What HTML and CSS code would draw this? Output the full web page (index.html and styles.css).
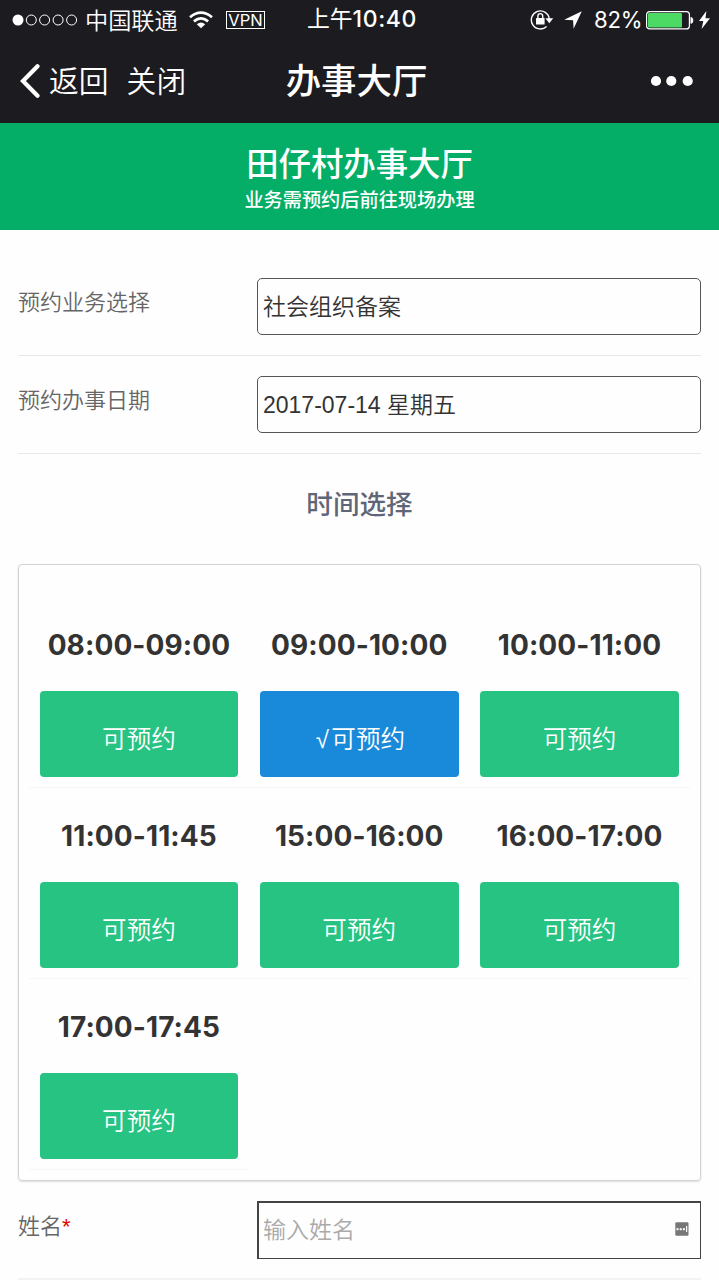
FILE: index.html
```html
<!DOCTYPE html>
<html lang="zh-CN">
<head>
<meta charset="utf-8">
<title>办事大厅</title>
<link rel="stylesheet" href="styles.css">
</head>
<body>
<header class="top">
  <div class="status">
    <div class="status-left">
      <svg class="signal" width="66" height="14" viewBox="0 0 66 14"><circle cx="6" cy="7" r="5.5" fill="#fff"/><g fill="none" stroke="#fff" stroke-width="1"><circle cx="19.3" cy="7" r="5"/><circle cx="32.6" cy="7" r="5"/><circle cx="46.1" cy="7" r="5"/><circle cx="59.6" cy="7" r="5"/></g></svg>
      <span class="carrier">中国联通</span>
      <svg class="wifi" width="24" height="18" viewBox="0 0 24 18"><g fill="none" stroke="#fff" stroke-width="2.7"><path d="M1 6.2Q12 -2.8 23 6.2"/><path d="M4.9 10.4Q12 4.4 19.1 10.4"/></g><path d="M12 17.2L7.8 13.2Q12 9.8 16.2 13.2Z" fill="#fff"/></svg>
      <span class="vpn">VPN</span>
    </div>
    <div class="clock">上午<span class="digits">10:40</span></div>
    <div class="status-right">
      <svg class="lock" width="24" height="22" viewBox="0 0 24 22"><path d="M19.3 10a9 9 0 1 0-2.7 7.4" fill="none" stroke="#fff" stroke-width="1.4"/><path d="M15.4 9.3H23.2L19.3 14.2Z" fill="#fff"/><rect x="6" y="9" width="8.6" height="6.6" rx=".6" fill="#fff"/><path d="M7.9 10V7a2.4 2.4 0 0 1 4.8 0V10" fill="none" stroke="#fff" stroke-width="1.4"/></svg>
      <svg class="arrow" width="18" height="18" viewBox="0 0 18 18"><path d="M17.8.3L9.6 17.8 9.1 9.2 .2 8.7Z" fill="#fff"/></svg>
      <span class="percent">82%</span>
      <svg class="battery" width="48" height="19" viewBox="0 0 48 19"><rect x=".6" y=".6" width="42.8" height="17.3" rx="3" fill="none" stroke="#fff" stroke-width="1.2"/><rect x="2" y="2" width="34" height="14.5" rx="1.2" fill="#4cd964"/><path d="M44.8 6.3Q47 6.5 47 9.4T44.8 12.5Z" fill="#fff" stroke="#fff" stroke-width=".6"/></svg>
      <svg class="bolt" width="11" height="18" viewBox="0 0 11 18"><path d="M7.4 0L0 10h4.3L2.6 18 11 7.2H6.5Z" fill="#fff"/></svg>
    </div>
  </div>
  <nav class="nav">
    <div class="nav-left">
      <svg class="chevron" width="21" height="36" viewBox="0 0 21 36"><path d="M18.5 3.2L4 18 18.5 32.8" fill="none" stroke="#fff" stroke-width="4.2" stroke-linecap="round"/></svg>
      <span class="back">返回</span><span class="close">关闭</span>
    </div>
    <h1 class="nav-title">办事大厅</h1>
    <svg class="more" width="44" height="12" viewBox="0 0 44 12"><g fill="#fff"><circle cx="6" cy="6" r="5.1"/><circle cx="21.3" cy="6" r="5.1"/><circle cx="37.7" cy="6" r="5.1"/></g></svg>
  </nav>
</header>
<section class="banner">
  <h2 class="banner-title">田仔村办事大厅</h2>
  <p class="banner-note">业务需预约后前往现场办理</p>
</section>
<main class="form">
  <div class="row"><label class="label">预约业务选择</label><div class="field">社会组织备案</div></div>
  <div class="row"><label class="label">预约办事日期</label><div class="field">2017-07-14 星期五</div></div>
  <h3 class="section-title">时间选择</h3>
  <div class="card">
    <div class="slot"><div class="time">08:00-09:00</div><div class="book">可预约</div></div>
    <div class="slot"><div class="time">09:00-10:00</div><div class="book selected"><span class="check">√</span>可预约</div></div>
    <div class="slot"><div class="time">10:00-11:00</div><div class="book">可预约</div></div>
    <div class="slot"><div class="time">11:00-11:45</div><div class="book">可预约</div></div>
    <div class="slot"><div class="time">15:00-16:00</div><div class="book">可预约</div></div>
    <div class="slot"><div class="time">16:00-17:00</div><div class="book">可预约</div></div>
    <div class="slot"><div class="time">17:00-17:45</div><div class="book">可预约</div></div>
  </div>
  <div class="row name-row"><label class="label">姓名<span class="required">*</span></label>
    <div class="field name-field"><span>输入姓名</span>
      <svg width="14" height="14" viewBox="0 0 14 14"><rect x=".3" y=".3" width="13.2" height="13.4" rx="1.2" fill="#777"/><g fill="#fff"><rect x="1.5" y="6.2" width="2" height="2"/><rect x="4.7" y="6.2" width="2" height="2"/><rect x="7.9" y="6.2" width="2" height="2"/><rect x="11" y="4" width="1.2" height="6"/></g></svg>
    </div>
  </div>
</main>
</body>
</html>
```
FILE: styles.css
```css
* { box-sizing: border-box; }
body {
  margin: 0;
  height: 1280px;
  overflow: hidden;
  background: #fefefe;
  color: #333;
  font-family: "Liberation Sans", "Noto Sans CJK SC", sans-serif;
}
h1, h2, h3, p { margin: 0; }
svg { display: block; flex: none; }
.top { height: 123px; background: #1c1b20; color: #fff; font-family: "Noto Sans CJK SC", sans-serif; }
.status { display: flex; height: 40px; align-items: center; white-space: nowrap; }
.status-left { display: flex; width: 307px; padding-left: 12px; align-items: center; }
.carrier { margin-left: 7px; width: 94px; font-size: 23.2px; line-height: 36px; padding-bottom: 3px; font-weight: 350; }
.wifi { margin-left: 10px; }
.vpn {
  margin-left: 13px; width: 39px; height: 18px; border: 1px solid #fff;
  font: 16.5px/16px "Inter", sans-serif; text-align: center;
}
.clock { display: flex; width: 222px; font-size: 22.8px; line-height: 36px; padding-bottom: 2px; }
.digits { font: 500 23px/38px "Inter", sans-serif; letter-spacing: .6px; }
.status-right { display: flex; align-items: center; }
.lock { margin-left: 1px; }
.arrow { margin-left: 10px; }
.percent { margin-left: 12px; width: 52px; font: 22.2px/40px "Inter", sans-serif; letter-spacing: -.2px; }
.bolt { margin-left: 5px; }
.nav { display: grid; height: 83px; padding: 0 25px 2px 19px; grid-template-columns: 1fr auto 1fr; align-items: center; }
.nav-left { display: flex; align-items: center; font-size: 29.8px; line-height: 56px; font-weight: 350; }
.chevron { margin-right: 9px; }
.back, .close { padding-bottom: 4px; }
.close { margin-left: 18px; }
.nav-title { padding-bottom: 4px; font-size: 35.4px; font-weight: 500; line-height: 56px; }
.more { justify-self: end; }
.banner { height: 107px; padding-top: 17px; background: #04ae66; color: #fff; text-align: center; font-family: "Noto Sans CJK SC", sans-serif; }
.banner-title { font-size: 32.4px; font-weight: 500; line-height: 44px; }
.banner-note { font-size: 19.2px; font-weight: 500; line-height: 30px; }
.form { padding: 27px 18px 0; }
.row { display: flex; height: 98px; padding-top: 21px; border-bottom: 1px solid #e8e8e8; }
.row:first-child { height: 99px; }
.label { width: 239px; padding-top: 6px; color: #666; font-size: 22px; font-weight: 350; line-height: 38px; }
.field { flex: 1; height: 57px; padding: 0 5px; border: 1px solid #555; border-radius: 5px; font-size: 23px; font-weight: 350; line-height: 57px; }
.row + .row { padding-top: 20px; }
.section-title { padding-top: 32px; height: 110px; color: #5f6678; font-size: 26.6px; font-weight: 500; line-height: 38px; text-align: center; }
.card {
  display: grid; grid-template-columns: repeat(3, 220.3px); height: 617px; padding: 32px 10px 0;
  align-content: start; border: 1px solid #d3d3d3; border-radius: 4px; box-shadow: 0 1px 2px #ddd;
}
.slot { height: 191px; padding: 24px 11px 0 10.6px; border-bottom: 1px solid #f6f6f6; }
.time { font: 700 28px/48px "Inter", sans-serif; text-align: center; white-space: nowrap; letter-spacing: .1px; }
.book { height: 86px; margin-top: 22px; border-radius: 4px; background: #27c383; color: #fff; font: 350 24.6px/92px "Noto Sans CJK SC", sans-serif; text-align: center; }
.selected { background: #1989da; }
.check { display: inline-block; width: 18px; font: 24px/24px "Liberation Sans", sans-serif; text-align: center; }
.name-row { padding-top: 20px; height: 99px; border-bottom: 2px solid #f3f3f3; }
.name-row .label { padding-top: 7px; }
.required { color: #e00000; }
.name-field { display: flex; align-items: center; justify-content: space-between; padding-right: 11px; height: 58px; border-color: #444; border-top-width: 2px; border-left-width: 2px; border-radius: 0; color: #aaa; padding-left: 4px; }
.name-field svg { margin-top: -4px; }
```
